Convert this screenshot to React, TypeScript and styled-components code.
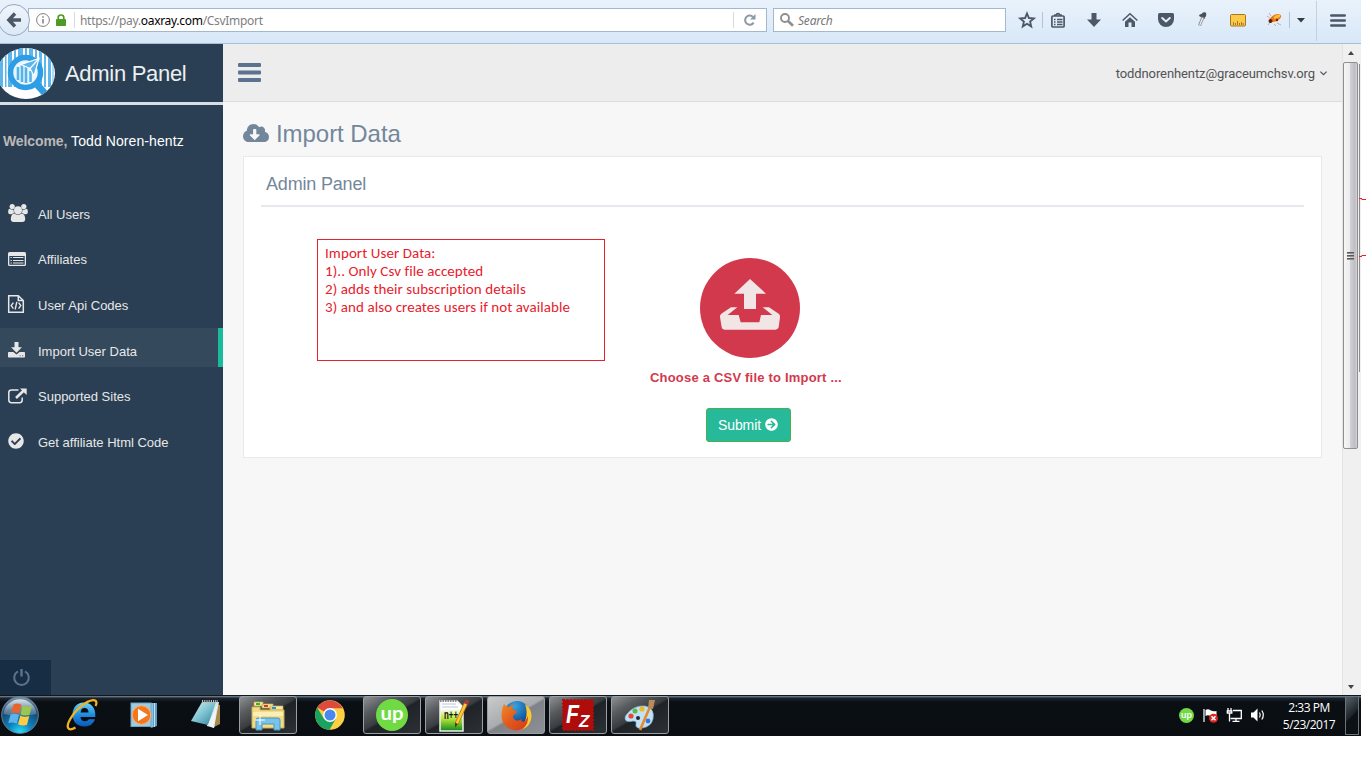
import React from 'react';
import styled, { createGlobalStyle, css } from 'styled-components';
import { FaCheckCircle, FaArrowCircleRight, FaCloudDownloadAlt } from 'react-icons/fa';

const GlobalStyle = createGlobalStyle`
  * { box-sizing: border-box; }
  body { margin: 0; background: #fff; overflow: hidden; font-family: "Liberation Sans", Arial, sans-serif; }
  svg { display: block; flex: none; overflow: visible; }
`;

const Screen = styled.div`
  position: relative;
  width: 1366px;
  height: 768px;
  background: #fff;
`;
const Windowed = styled.div`
  width: 1361px;
  height: 736px;
  display: flex;
  flex-direction: column;
`;

/* ---------- browser bar ---------- */
const BrowserBar = styled.div`
  height: 44px;
  display: flex;
  align-items: flex-start;
  background: linear-gradient(#e9f2fb, #d8e8f8);
  border-bottom: 1px solid #a9bdd3;
  font-family: "Noto Sans", "Open Sans", sans-serif;
  font-size: 12px;
`;
const BackButton = styled.div`
  width: 32px;
  height: 32px;
  margin: 4px 0 0 -2px;
  border-radius: 50%;
  border: 1px solid #93a8c0;
  background: linear-gradient(#eff5fc, #dce8f5);
  display: flex;
  align-items: center;
  justify-content: center;
  z-index: 1;
`;
const Field = styled.div<{ $w: number; $ml: number }>`
  width: ${p => p.$w}px;
  margin: 8px 0 0 ${p => p.$ml}px;
  height: 24px;
  border: 1px solid #a3b7cd;
  background: #fff;
  display: flex;
  align-items: center;
  white-space: nowrap;
`;
const Address = styled.span`
  margin-left: 5px;
  padding-top: 2px;
  color: #808080;
  flex: 1;
  line-height: 20px;
  letter-spacing: -0.3px;
  b { font-weight: 400; color: #000; }
`;
const Placeholder = styled.i`
  color: #777;
  margin-left: 4px;
  letter-spacing: -0.2px;
`;
const Divider = styled.div<{ $h?: number; $mt?: number; $color?: string }>`
  width: 1px;
  height: ${p => p.$h ?? 16}px;
  margin-top: ${p => p.$mt ?? 0}px;
  background: ${p => p.$color ?? '#d5dade'};
`;
const Tools = styled.div`
  display: flex;
  gap: 6px;
`;
const Tool = styled.div<{ $w?: number; $ml?: number }>`
  width: ${p => p.$w ?? 30}px;
  margin-left: ${p => p.$ml ?? 0}px;
  height: 40px;
  display: flex;
  align-items: center;
  justify-content: center;
`;

/* ---------- page ---------- */
const Viewport = styled.div`
  flex: 1;
  min-height: 0;
  display: flex;
  background: #f7f7f7;
`;
const Sidebar = styled.aside`
  width: 223px;
  background: #2a3f54;
  display: flex;
  flex-direction: column;
`;
const Brand = styled.div`
  height: 61px;
  padding-top: 2px;
  border-bottom: 3px solid #d9dee4;
  display: flex;
  align-items: center;
  color: #ecf0f1;
  font-size: 22px;
  letter-spacing: -0.3px;
  gap: 9px;
`;
const Welcome = styled.div`
  margin: 28px 0 0 3px;
  font-size: 14px;
  line-height: 17px;
  letter-spacing: 0.09px;
  color: #fff;
  white-space: nowrap;
  b { color: #bab8b8; letter-spacing: -0.1px; }
`;
const Menu = styled.nav`
  margin-top: 41.3px;
  flex: 1;
  display: flex;
  flex-direction: column;
  gap: 6.6px;
`;
const MenuItem = styled.a<{ $active?: boolean }>`
  height: 39px;
  padding: 7px 0 0 8px;
  display: flex;
  align-items: center;
  font-size: 13px;
  color: #e7e7e7;
  ${p => p.$active && css`
    background: #35495d;
    border-right: 5px solid #1abb9c;
  `}
`;
const MenuIcon = styled.span`
  width: 30px;
  height: 20px;
  margin-top: -2px;
  display: flex;
  align-items: center;
`;
const PowerButton = styled.div`
  width: 51px;
  height: 35px;
  padding-left: 13px;
  background: #172d44;
  display: flex;
  align-items: center;
`;
const Main = styled.main`
  flex: 1;
  display: flex;
  flex-direction: column;
`;
const TopNav = styled.header`
  height: 58px;
  padding: 0 15px;
  background: #ededed;
  border-bottom: 1px solid #d9dee4;
  display: flex;
  align-items: center;
  justify-content: space-between;
`;
const Account = styled.div`
  display: flex;
  align-items: center;
  gap: 5px;
  padding-top: 1px;
  font-family: Roboto, sans-serif;
  font-size: 13px;
  letter-spacing: -0.1px;
  color: #515356;
`;
const PageTitle = styled.h1`
  margin: 17px 0 0 20px;
  height: 30px;
  display: flex;
  align-items: center;
  gap: 7px;
  font-weight: 400;
  font-size: 24px;
  letter-spacing: -0.05px;
  color: #73879c;
  svg { margin-top: -2px; }
`;
const Panel = styled.section`
  margin: 7px 20px 0;
  height: 302px;
  padding: 0 17px;
  background: #fff;
  border: 1px solid #e6e9ed;
`;
const PanelTitle = styled.h2`
  margin: 0;
  height: 50px;
  padding: 6px 0 0 5px;
  border-bottom: 2px solid #e6e9ed;
  display: flex;
  align-items: center;
  font-weight: 400;
  font-size: 18px;
  letter-spacing: -0.18px;
  color: #73879c;
`;
const PanelBody = styled.div`
  display: flex;
  padding: 32px 0 0 56px;
`;
const Note = styled.div`
  width: 288px;
  height: 122px;
  padding: 4px 7px;
  border: 1px solid #e8202c;
  color: #e8202c;
  font-family: Carlito, Lato, sans-serif;
  font-size: 15px;
  line-height: 18px;
  letter-spacing: 0.08px;
  white-space: nowrap;
`;
const Upload = styled.div`
  margin: 19px 0 0 45px;
  display: flex;
  flex-direction: column;
  align-items: flex-start;
`;
const UploadDisc = styled.div`
  width: 100px;
  height: 100px;
  margin-left: 50px;
  border-radius: 50%;
  background: #d3394c;
`;
const UploadLabel = styled.div`
  margin-top: 12px;
  line-height: 16px;
  font-size: 13px;
  font-weight: 700;
  letter-spacing: 0.2px;
  color: #d3394c;
  white-space: nowrap;
`;
const Submit = styled.button`
  width: 85px;
  height: 34px;
  margin: 22px 0 0 56px;
  padding: 0 1px 1px 0;
  border: 1px solid #4cae4c;
  border-radius: 3px;
  background: #26b99a;
  color: #fff;
  font: 14px "Liberation Sans", Arial, sans-serif;
  letter-spacing: -0.1px;
  display: flex;
  align-items: center;
  justify-content: center;
  gap: 4px;
`;

/* ---------- scrollbar ---------- */
const Scrollbar = styled.div`
  width: 19px;
  display: flex;
  background: #f0f0f0;
  border-left: 1px solid #e3e3e3;
`;
const ScrollTrack = styled.div`
  width: 15px;
  display: flex;
  flex-direction: column;
  align-items: center;
`;
const ScrollArrow = styled.div<{ $down?: boolean }>`
  width: 0;
  height: 0;
  margin: ${p => (p.$down ? 'auto 0 6px' : '7px 0 7px')};
  border: 3.5px solid transparent;
  ${p => (p.$down
    ? 'border-top: 4px solid #444; border-bottom: 0;'
    : 'border-bottom: 4px solid #444; border-top: 0;')}
`;
const Thumb = styled.div`
  width: 15px;
  height: 387px;
  border: 1px solid #8f8f8f;
  border-radius: 2px;
  background: linear-gradient(90deg, #f6f6f6, #ececee 42%, #cfcfd4 50%, #bdbdc4 85%, #d6d6da);
  display: flex;
  flex-direction: column;
  align-items: center;
  justify-content: center;
  gap: 1px;
`;
const Grip = styled.i`
  width: 7px;
  height: 2px;
  background: linear-gradient(#3e3e3e, #aaa);
`;
const OuterThumb = styled.div`
  width: 1px;
  height: 308px;
  margin: 20px 0 0 1px;
  background: #8c8c8c;
`;

/* ---------- taskbar ---------- */
const Taskbar = styled.footer`
  height: 41px;
  display: flex;
  background: linear-gradient(#10161d 0, #10161d 1px, #79858e 1px, #56616b 2px, #1b2630 3px, #0a0f14 7px, #0a0e13);
`;
const StartSlot = styled.div`
  width: 51px;
  padding: 1px 0 0 1px;
`;
const Slot = styled.div<{ $state?: 'open' | 'front' }>`
  width: 58px;
  height: 38px;
  margin: 1px 2px 0;
  display: flex;
  align-items: center;
  justify-content: center;
  ${p => p.$state && css`
    border: 1px solid #9a9fa3;
    border-radius: 3px;
    background: ${p.$state === 'front'
      ? 'linear-gradient(150deg, #c9cbcc 0, #a9abae 48%, #7f8286 52%, #8d9094 100%)'
      : 'linear-gradient(150deg, #8e9092 0, #5a5d60 25%, #393d40 48%, #1f2327 52%, #2c3135 100%)'};
  `}
`;
const Tray = styled.div`
  margin-left: auto;
  display: flex;
  align-items: center;
`;
const TrayIcons = styled.div`
  display: flex;
  gap: 9px;
  margin-right: 17px;
`;
const Clock = styled.div`
  width: 54px;
  margin-right: 9px;
  color: #fff;
  font: 12px/17px "Open Sans", "Noto Sans", sans-serif;
  letter-spacing: -0.5px;
  text-align: center;
  white-space: nowrap;
`;
const ShowDesktop = styled.div`
  width: 14px;
  height: 39px;
  margin-right: 2px;
  border: 1px solid #69737a;
  background: linear-gradient(135deg, #59636a, #1b2228 50%, #0c1116 52%);
`;

const Overflow = styled.svg`
  position: absolute;
  left: 1359px;
  top: 198px;
`;

const ink = '#4c5866';

const Logo = () => (
  <svg width="56" height="52" viewBox="0 0 56 52">
    <defs><clipPath id="disc"><ellipse cx="26" cy="25.5" rx="29" ry="25.5" /></clipPath></defs>
    <g clipPath="url(#disc)">
      <rect x="-4" width="60" height="52" fill="#fff" />
      <g fill="#5cb6ec">
        <rect x="0" width="3" height="39" /><rect x="5" width="1.5" height="39" /><rect x="8" width="4" height="39" />
        <rect x="14" width="2" height="39" /><rect x="18" width="5" height="39" /><rect x="25" width="2" height="39" />
        <rect x="29" width="4" height="39" /><rect x="35" width="2" height="39" /><rect x="39" width="3" height="39" />
        <rect x="44" width="2" height="39" /><rect x="48" width="3" height="39" /><rect x="52.5" width="1" height="39" />
      </g>
      <circle cx="25.500" cy="24.500" r="15" fill="#e8f5fd" stroke="#2d9ee6" strokeWidth="5.500" />
      <path d="M18 19v13M22 17v17M26 18v17M30.500 23v11" stroke="#55b3ec" strokeWidth="2.600" />
      <path d="M21 16.500L39 10.500L34 28L30 20.500Z" fill="#5cb6ec" stroke="#fff" strokeWidth="1.200" />
      <path d="M30 20.500L39 10.500" stroke="#fff" strokeWidth="1.200" />
      <path d="M35.500 35L46 46.500" stroke="#2d9ee6" strokeWidth="7" />
    </g>
  </svg>
);

const UsersIcon = () => (
  <svg width="20" height="18" viewBox="0 0 20 18" fill="#e7e7e7">
    <circle cx="4.200" cy="2.600" r="2.600" /><circle cx="15.800" cy="2.600" r="2.600" />
    <path d="M.2 7.600Q0 5 1.600 4.800Q4 6.300 5.600 5.400Q5.400 7.700 6.500 9.100Q4.500 9.300 3.700 10.300H2Q.2 10.300 .2 8.600Z" />
    <path d="M19.800 7.600Q20 5 18.400 4.800Q16 6.300 14.400 5.400Q14.600 7.700 13.500 9.100Q15.500 9.300 16.300 10.300H18Q19.800 10.300 19.800 8.600Z" />
    <circle cx="10" cy="6.200" r="4" />
    <path d="M6.300 9.400Q10 12 13.700 9.400Q17.200 10 17.200 15Q17.200 18 14.400 18H5.600Q2.800 18 2.800 15Q2.800 10 6.300 9.400Z" />
  </svg>
);
const ListIcon = () => (
  <svg width="18" height="14" viewBox="0 0 18 14">
    <path fillRule="evenodd" fill="#e7e7e7" d="M1.500 0h15A1.500 1.500 0 0 1 18 1.500v11a1.500 1.500 0 0 1-1.500 1.500h-15A1.500 1.500 0 0 1 0 12.500v-11A1.500 1.500 0 0 1 1.500 0ZM1.300 4v8.200q0 .5.500.5h14.400q.5 0 .5-.5V4Z" />
    <path d="M2.500 5.500h1.300M5 5.500h10.500M2.500 8.500h1.300M5 8.500h10.500M2.500 11h1.300M5 11h10.500" stroke="#e7e7e7" strokeWidth="1" />
  </svg>
);
const CodeFileIcon = () => (
  <svg width="16" height="18" viewBox="0 0 16 18" fill="none" stroke="#e7e7e7" strokeWidth="1.500">
    <path d="M.7.700H10.300L15.300 5.500V17.300H.7ZM10.300.700V5.500H15.300" />
    <path d="M5.400 7.600L3.200 10.600L5.400 13.600M10.600 7.600L12.800 10.600L10.600 13.600M8.800 6.800L7.200 14.400" strokeWidth="1.400" />
  </svg>
);
const DownloadIcon = () => (
  <svg width="17" height="16" viewBox="0 0 17 16">
    <path fill="#e7e7e7" d="M6.500 0h4v5.300h3.400L8.500 10.700L3.100 5.300h3.400Z" />
    <path fill="#e7e7e7" d="M.8 10h4.500l3.200 2.500L11.700 10h4.500q.8 0 .8.800v4q0 .7-.8.700H.8Q0 15.500 0 14.800v-4Q0 10 .8 10Z" />
    <path fill="#8c979f" d="M11.500 13h1.300v1.200h-1.300zM14 13h1.300v1.200H14z" />
  </svg>
);
const ExternalIcon = () => (
  <svg width="19" height="16" viewBox="0 0 19 16">
    <path d="M10.500 2H3.500Q.8 2 .8 4.600V12Q.8 14.700 3.500 14.700H11.500Q14.200 14.700 14.200 12V9.500" fill="none" stroke="#e7e7e7" strokeWidth="1.500" />
    <path d="M8 10L15.500 2.800" stroke="#e7e7e7" strokeWidth="2.600" />
    <path d="M12 .4H18.700V7L16.500 5L14 2.500Z" fill="#e7e7e7" />
  </svg>
);
const PowerIcon = () => (
  <svg width="17" height="17" viewBox="0 0 17 17" fill="none" stroke="#5a738e" strokeWidth="2">
    <path d="M5 2.300A7.300 7.300 0 1 0 12 2.300" /><path d="M8.500 0V7.500" strokeWidth="2.400" />
  </svg>
);
const UploadIcon = () => (
  <svg width="100" height="100" viewBox="0 0 300 300" fill="#f2e5e6">
    <path d="M150 63L198 107H168V153H132V107H103Z" />
    <path d="M93 148H112L83 171H116L122 193H178L183 171H217L188 148H207L236 167Q241 171 240 177L236 208Q234 215 226 215H74Q66 215 65 208L60 177Q59 171 64 167Z" />
  </svg>
);

const StartOrb = () => (
  <svg width="38" height="38" viewBox="0 0 38 38">
    <defs>
      <radialGradient id="orb" cx=".5" cy="1" r=".95"><stop offset="0" stopColor="#27e6ff" /><stop offset=".35" stopColor="#0f82bd" /><stop offset=".75" stopColor="#15476f" /><stop offset="1" stopColor="#6f8ca5" /></radialGradient>
      <linearGradient id="gloss" x2="0" y2="1"><stop offset="0" stopColor="#dbe6ee" /><stop offset="1" stopColor="#6e8ba3" stopOpacity=".5" /></linearGradient>
    </defs>
    <circle cx="19" cy="19" r="18.300" fill="url(#orb)" stroke="#6b8296" strokeWidth="1" />
    <path d="M2.500 18A16.600 16.600 0 0 1 35.500 18Q19 22 2.500 18Z" fill="url(#gloss)" />
    <path d="M12.500 8.500Q16 6.500 20.500 8.800L18.300 17.500Q13.500 15.400 10 17.300Z" fill="#e8642c" />
    <path d="M21.800 9.500Q26.500 12 31 10L28.500 18.800Q24 20.500 19.500 18.200Z" fill="#9ac84a" />
    <path d="M9.600 18.600Q13.500 16.800 18 19L15.700 27.600Q11 25.500 7.300 27Z" fill="#5cb4ea" />
    <path d="M19.300 19.700Q24 21.800 28.300 20L26 28.800Q21.500 30.400 17 28.200Z" fill="#ffcb45" />
  </svg>
);
const IeIcon = () => (
  <svg width="32" height="32" viewBox="0 0 32 32">
    <defs><linearGradient id="ie" x2="0" y2="1"><stop offset="0" stopColor="#6fd3f8" /><stop offset=".5" stopColor="#1e8ee0" /><stop offset="1" stopColor="#0a58b8" /></linearGradient></defs>
    <path fillRule="evenodd" fill="url(#ie)" d="M17.500 3.500C25.500 3.500 30 9 29.300 18H14.500Q15 22.300 19 22.300Q21.700 22.300 23 20.200H29Q26.500 27.500 18.500 27.500C10.500 27.500 6.500 22 6.500 15.500S11 3.500 17.500 3.500ZM14.600 13.400H22.600Q22.200 9 18.600 9T14.600 13.400Z" />
    <path d="M9.500 28.500C2 33 -.5 28.500 4 20.500C10 9.500 20.500 2 27 1.200C31 1 31 4.500 29.500 7" fill="none" stroke="#f3b51d" strokeWidth="2.300" />
  </svg>
);
const PlayerIcon = () => (
  <svg width="28" height="28" viewBox="0 0 28 28">
    <path d="M5 2H27V25L21 27Z" fill="#5b9fc6" /><path d="M24.500 2V26M22 2V26" stroke="#c3e1ef" strokeWidth="1" />
    <rect x="1" y="2" width="20" height="23.500" fill="#9fcbe2" stroke="#6ba5c6" />
    <circle cx="11.500" cy="14" r="9.300" fill="#f4771d" stroke="#fbb077" /><path d="M8 7.800L18 14L8 20.200Z" fill="#fff" />
  </svg>
);
const NotepadIcon = () => (
  <svg width="32" height="32" viewBox="0 0 32 32">
    <defs><linearGradient id="pad" x2="1" y2="1"><stop offset="0" stopColor="#dff2f6" /><stop offset=".5" stopColor="#7cc2d0" /><stop offset="1" stopColor="#2d7e94" /></linearGradient></defs>
    <path d="M26 5L30 6V25L24 28Z" fill="#a88748" />
    <path d="M13 3H29L24 29L17 27Z" fill="#dae6ea" /><path d="M12 3H26L18 26L1 22Z" fill="url(#pad)" />
    <path d="M12 2.500H28" stroke="#bcbcbc" strokeWidth="3" strokeDasharray="1.200 1" /><path d="M18 26L27 6L24 29Z" fill="#eef5f7" />
  </svg>
);
const ExplorerIcon = () => (
  <svg width="34" height="32" viewBox="0 0 34 32">
    <path d="M3 3H12V7H3ZM11 5H22V9H11ZM19 7H32V11H19Z" fill="#f7e8a3" stroke="#c9a94a" strokeWidth=".7" />
    <path d="M5 4h4v2H5z" fill="#1fba2e" /><path d="M13 6h4v2h-4z" fill="#d93b27" /><path d="M21 8h4v2h-4z" fill="#2492e8" />
    <path d="M1 8H9V11H33V29H1Z" fill="#f3dc86" stroke="#cfae54" /><path d="M2 13H32V17H2Z" fill="#fbefb5" />
    <path d="M5 31V21Q5 19 7 19H27Q29 19 29 21V31H23V25H11V31Z" fill="#79c3ea" stroke="#4694c5" />
    <path d="M9 16V26M4 21H14" stroke="#fff" strokeWidth="1" />
  </svg>
);
const ChromeIcon = () => (
  <svg width="30" height="30" viewBox="0 0 30 30">
    <circle cx="15" cy="15" r="14.800" fill="#fdd043" />
    <path d="M15 15L2.200 7.600A14.800 14.800 0 0 1 27.800 8.200H15Z" fill="#dd4b3e" />
    <path d="M15 15L9 18.700L2.200 7.600A14.800 14.800 0 0 0 14.500 29.800L21 18.500Z" fill="#1aa260" />
    <circle cx="15" cy="15" r="6.900" fill="#fff" /><circle cx="15" cy="15" r="5.500" fill="#4a87ee" />
  </svg>
);
const UpworkIcon = ({ size }: { size: number }) => (
  <svg width={size} height={size} viewBox="0 0 32 32">
    <circle cx="16" cy="16" r="16" fill="#6fda44" />
    <text x="16" y="20.500" textAnchor="middle" textLength="23" lengthAdjust="spacingAndGlyphs" fontFamily="Lato, sans-serif" fontWeight="700" fontSize="18" fill="#fff">up</text>
  </svg>
);
const NotepadPlusIcon = () => (
  <svg width="32" height="33" viewBox="0 0 32 33">
    <defs><linearGradient id="npp" x2="0" y2="1"><stop offset=".25" stopColor="#fff" /><stop offset=".6" stopColor="#b4e436" /><stop offset="1" stopColor="#0d8a1d" /></linearGradient></defs>
    <path d="M2 2H19L25 8V32H2Z" fill="url(#npp)" stroke="#eee" strokeWidth="1.500" />
    <path d="M4 5H18M4 8H20" stroke="#b9c6dc" strokeWidth="1" /><path d="M2 2H19" stroke="#888" strokeWidth="2" strokeDasharray="1.500 1" />
    <text x="6" y="20" fontFamily="Liberation Sans, sans-serif" fontSize="13" fontWeight="700" textLength="14" lengthAdjust="spacingAndGlyphs" fill="#111">n++</text>
    <path d="M28 4L18.500 25" stroke="#bd7a16" strokeWidth="4.200" /><path d="M28 4L18.500 25" stroke="#ffc93a" strokeWidth="2.400" />
    <path d="M29.600 1L27.800 5" stroke="#a53b3b" strokeWidth="4" /><path d="M17 23.500L20 25L17 28.500Z" fill="#4a3a1a" />
  </svg>
);
const FirefoxIcon = () => (
  <svg width="31" height="31" viewBox="0 0 31 31">
    <defs>
      <linearGradient id="fox" x2="1" y2="1"><stop offset="0" stopColor="#f08a24" /><stop offset=".5" stopColor="#e2581e" /><stop offset="1" stopColor="#cf3a1a" /></linearGradient>
      <radialGradient id="globe" cx=".4" cy=".2" r=".8"><stop offset="0" stopColor="#36a6e3" /><stop offset="1" stopColor="#0b3a80" /></radialGradient>
    </defs>
    <circle cx="16" cy="14" r="13" fill="url(#globe)" />
    <path d="M24 4Q31 9 30.500 17Q29 29 16 30.500Q22 27 24.500 20Q27 12 24 4Z" fill="#fbc92f" />
    <path d="M3 4Q5 7 8 7Q10 5 13 4.500Q10.500 8 12.500 10Q15 10.500 16 11.500Q16 13 12.500 15Q11 19 15 20.500Q18 21 20.500 19Q20 23 24 21Q26 19 26.500 16Q28 21 24.500 26Q21 30.500 15 30.500Q2 29 .5 17Q.5 9 3 4Z" fill="url(#fox)" />
  </svg>
);
const FilezillaIcon = () => (
  <svg width="32" height="32" viewBox="0 0 32 32">
    <rect x="1" y="1" width="30" height="30" fill="#b00c0c" stroke="#b00c0c" strokeWidth="2" strokeDasharray="2 1.500" />
    <g fontFamily="Liberation Sans, sans-serif" fontWeight="700" fontStyle="italic" fill="#fff">
      <text x="4" y="24" fontSize="26" textLength="13" lengthAdjust="spacingAndGlyphs">F</text>
      <text x="17" y="28" fontSize="17">Z</text>
    </g>
  </svg>
);
const PaintIcon = () => (
  <svg width="32" height="32" viewBox="0 0 32 32">
    <path d="M3 15Q10 6 21 7Q31 9 29 20Q27 28 18 29Q11 30 12 25Q13 22 9 22Q1 24 1 19Q1 17 3 15Z" fill="#c3e1f4" stroke="#7fb3d6" strokeWidth=".7" />
    <circle cx="7" cy="17" r="2.600" fill="#e14a3b" /><circle cx="11" cy="12" r="2.500" fill="#59b943" /><circle cx="18" cy="10" r="2.600" fill="#efb923" />
    <circle cx="14" cy="19" r="2" fill="#1c2c3a" /><circle cx="24" cy="22" r="2.400" fill="#3b78d6" />
    <path d="M25.500 9L16 31" stroke="#e58a2d" strokeWidth="2.600" /><path d="M25 1L31 1L29 10L24 9Z" fill="#b98b5a" />
  </svg>
);

const menu = [
  { label: 'All Users', icon: <UsersIcon /> },
  { label: 'Affiliates', icon: <ListIcon /> },
  { label: 'User Api Codes', icon: <CodeFileIcon /> },
  { label: 'Import User Data', icon: <DownloadIcon />, active: true },
  { label: 'Supported Sites', icon: <ExternalIcon /> },
  { label: 'Get affiliate Html Code', icon: <FaCheckCircle size={16} /> },
];

const tasks: { icon: React.ReactNode; state?: 'open' | 'front' }[] = [
  { icon: <IeIcon /> },
  { icon: <PlayerIcon /> },
  { icon: <NotepadIcon /> },
  { icon: <ExplorerIcon />, state: 'open' },
  { icon: <ChromeIcon /> },
  { icon: <UpworkIcon size={32} />, state: 'open' },
  { icon: <NotepadPlusIcon />, state: 'open' },
  { icon: <FirefoxIcon />, state: 'front' },
  { icon: <FilezillaIcon />, state: 'open' },
  { icon: <PaintIcon />, state: 'open' },
];

const Browser = () => (
  <BrowserBar>
    <BackButton>
      <svg width="16" height="16" viewBox="0 0 16 16" fill="none" stroke={ink} strokeWidth="3.400"><path d="M9 1.500L2.800 8L9 14.500M3 8H15" /></svg>
    </BackButton>
    <Field $w={739} $ml={-2}>
      <svg width="14" height="14" viewBox="0 0 14 14" style={{ marginLeft: 7 }} fill="none" stroke="#7e7e7e"><circle cx="7" cy="7" r="6.400" /><path d="M7 6V10.500M7 3.200V4.800" strokeWidth="1.500" /></svg>
      <svg width="10" height="12" viewBox="0 0 10 12" style={{ marginLeft: 6 }}><path d="M2.200 6V3.500Q2.200 1 5 1T7.800 3.500V6" fill="none" stroke="#4d9a27" strokeWidth="1.700" /><rect y="5" width="10" height="7" rx=".8" fill="#4d9a27" /></svg>
      <Divider style={{ marginLeft: 8 }} />
      <Address>https://pay.<b>oaxray.com</b>/CsvImport</Address>
      <Divider />
      <Tool $w={32}>
        <svg width="12" height="12" viewBox="0 0 12 12"><path d="M9.600 8.600A4.600 4.600 0 1 1 9 2.900" fill="none" stroke="#8a98a8" strokeWidth="2" /><path d="M11.500 0V5.500H6Z" fill="#8a98a8" /></svg>
      </Tool>
    </Field>
    <Field $w={233} $ml={6}>
      <svg width="14" height="14" viewBox="0 0 14 14" style={{ marginLeft: 6 }} fill="none" stroke="#8f8f8f"><circle cx="5" cy="5" r="4" strokeWidth="1.900" /><path d="M8 8L13 12.800" strokeWidth="2.600" /></svg>
      <Placeholder>Search</Placeholder>
    </Field>
    <Tool $ml={6}>
      <svg width="16" height="16" viewBox="0 0 16 16" fill="none" stroke={ink} strokeWidth="1.900"><path d="M8 1.500L9.900 6L14.800 6.400L11.100 9.600L12.200 14.400L8 11.800L3.800 14.400L4.900 9.600L1.200 6.400L6.100 6Z" /></svg>
    </Tool>
    <Divider $mt={12} $color="#b3c3d4" />
    <Tools>
      <Tool><svg width="14" height="15" viewBox="0 0 14 15" fill="none" stroke={ink}><rect x=".9" y="3" width="12.200" height="11" rx="1" strokeWidth="1.700" /><path d="M4 3V2H5.500Q5.500.6 7 .6T8.500 2H10V3" strokeWidth="1.700" /><path d="M3 6.500h1.500M6 6.500h5.500M3 9h1.500M6 9h5.500M3 11.500h1.500M6 11.500h5.500" strokeWidth="1.300" /></svg></Tool>
      <Tool><svg width="14" height="14" viewBox="0 0 14 14" fill={ink}><path d="M4.500 0H9.500V6.500H14L7 14L0 6.500H4.500Z" /></svg></Tool>
      <Tool><svg width="16" height="14" viewBox="0 0 16 14"><path d="M.6 7.500L8 .8L15.400 7.500" fill="none" stroke={ink} strokeWidth="1.500" /><path d="M3 8.700L8 4.300L13 8.700V14H9.500V9.500H6.500V14H3Z" fill={ink} /></svg></Tool>
      <Tool><svg width="16" height="14" viewBox="0 0 16 14"><path d="M1.500 0H14.500Q16 0 16 1.500V6A8 8 0 0 1 0 6V1.500Q0 0 1.500 0Z" fill={ink} /><path d="M4.200 5L8 8.500L11.800 5" fill="none" stroke="#e6eff9" strokeWidth="2" strokeLinecap="round" /></svg></Tool>
      <Tool><svg width="12" height="16" viewBox="0 0 12 16"><path d="M3 4Q3 2 5.500 2L7 .5Q9.500-.5 10.300 1.500Q10.500 4 9 5.500L8.500 7Z" fill="#4a5058" /><path d="M7 5L3.500 13.500" stroke="#8b9299" strokeWidth="3.200" /><path d="M6.700 6L3.800 13" stroke="#e9edf0" strokeWidth="1.400" /></svg></Tool>
      <Tool><svg width="16" height="13" viewBox="0 0 16 13"><rect x=".5" y=".5" width="15" height="11.500" rx="1" fill="#fcc948" stroke="#a87520" /><path d="M3.500 11V8M5.500 11V9M7.500 11V7M9.500 11V9M11.500 11V8M13.200 11V9" stroke="#a87520" /></svg></Tool>
      <Tool><svg width="16" height="14" viewBox="0 0 16 14"><path d="M1 3L5 6M2 12L5 8M11 10L15 12M8 11L10 13M5 3L3 0" stroke="#a5713c" strokeWidth=".5" /><ellipse cx="9.500" cy="5" rx="6" ry="3.300" transform="rotate(-25 9.500 5)" fill="#e9781b" /><ellipse cx="11" cy="3.700" rx="3.500" ry="1.500" transform="rotate(-25 11 3.700)" fill="#fbc13e" /><circle cx="4.500" cy="8" r="2" fill="#5d1f0c" /><circle cx="11" cy="7" r="1.200" fill="#861b10" /></svg></Tool>
    </Tools>
    <Divider $mt={12} $color="#b3c3d4" />
    <Tool $w={21}><svg width="8" height="5" viewBox="0 0 8 5"><path d="M0 0H8L4 4.500Z" fill="#333c46" /></svg></Tool>
    <Divider $h={40} $mt={1} $color="#c3d0de" style={{ marginLeft: 5 }} />
    <Tool $w={42}><svg width="16" height="13" viewBox="0 0 16 13" stroke={ink} strokeWidth="2.600" strokeLinecap="round"><path d="M1.300 1.500H14.700M1.300 6.500H14.700M1.300 11.500H14.700" /></svg></Tool>
  </BrowserBar>
);

export default function App() {
  return (
    <Screen>
      <GlobalStyle />
      <Windowed>
        <Browser />
        <Viewport>
          <Sidebar>
            <Brand><Logo />Admin Panel</Brand>
            <Welcome><b>Welcome,</b> Todd Noren-hentz</Welcome>
            <Menu>
              {menu.map(m => (
                <MenuItem key={m.label} $active={m.active}><MenuIcon>{m.icon}</MenuIcon>{m.label}</MenuItem>
              ))}
            </Menu>
            <PowerButton><PowerIcon /></PowerButton>
          </Sidebar>
          <Main>
            <TopNav>
              <svg width="23" height="19" viewBox="0 0 23 19" fill="#5a738e"><rect width="23" height="4" rx="1" /><rect y="7.500" width="23" height="4" rx="1" /><rect y="15" width="23" height="4" rx="1" /></svg>
              <Account>
                toddnorenhentz@graceumchsv.org
                <svg width="7" height="5" viewBox="0 0 7 5" fill="none" stroke="#515356" strokeWidth="1.200"><path d="M.4.600L3.500 3.700L6.600.600" /></svg>
              </Account>
            </TopNav>
            <PageTitle><FaCloudDownloadAlt size={26} />Import Data</PageTitle>
            <Panel>
              <PanelTitle>Admin Panel</PanelTitle>
              <PanelBody>
                <Note>
                  <div>Import User Data:</div>
                  <div>1).. Only Csv file accepted</div>
                  <div>2) adds their subscription details</div>
                  <div>3) and also creates users if not available</div>
                </Note>
                <Upload>
                  <UploadDisc><UploadIcon /></UploadDisc>
                  <UploadLabel>Choose a CSV file to Import ...</UploadLabel>
                  <Submit>Submit <FaArrowCircleRight size={13} /></Submit>
                </Upload>
              </PanelBody>
            </Panel>
          </Main>
          <Scrollbar>
            <ScrollTrack>
              <ScrollArrow />
              <Thumb><Grip /><Grip /><Grip /></Thumb>
              <ScrollArrow $down />
            </ScrollTrack>
            <OuterThumb />
          </Scrollbar>
        </Viewport>
        <Taskbar>
          <StartSlot><StartOrb /></StartSlot>
          {tasks.map((t, i) => <Slot key={i} $state={t.state}>{t.icon}</Slot>)}
          <Tray>
            <TrayIcons>
              <UpworkIcon size={15} />
              <svg width="15" height="15" viewBox="0 0 15 15"><path d="M1 1V14" stroke="#fff" strokeWidth="1.200" /><path d="M2.500 2Q5 .500 7.500 2.200T13.500 3V9Q10 9.500 7.500 8T2.500 8Z" fill="#fff" /><circle cx="10.500" cy="10.300" r="4.500" fill="#d9261f" /><path d="M8.500 8.300L12.500 12.300M12.500 8.300L8.500 12.300" stroke="#fff" strokeWidth="1.500" /></svg>
              <svg width="15" height="14" viewBox="0 0 15 14" fill="none" stroke="#fff" strokeWidth="1.300"><path d="M6 2.500H14.300V10.500H3.500M9 10.500V13M5.500 13.300H12.500" /><path d="M1 0V2.500M4 0V2.500M.3 3H4.800V5H.3ZM2.500 5V13.500" /></svg>
              <svg width="14" height="14" viewBox="0 0 14 14"><path d="M0 4.500H2.500L6.500 .500V13.500L2.500 9.500H0Z" fill="#fff" /><path d="M8.500 4.500Q10 7 8.500 9.500M10.800 2.500Q13.800 7 10.800 11.500" fill="none" stroke="#fff" strokeWidth="1.200" /></svg>
            </TrayIcons>
            <Clock>2:33 PM<br />5/23/2017</Clock>
            <ShowDesktop />
          </Tray>
        </Taskbar>
      </Windowed>
      <Overflow width="7" height="60" viewBox="0 0 7 60" stroke="#ed1c24">
        <path d="M0 .500H3M2.500 1.500H7M0 58.500H3M2.500 57.500H7" />
      </Overflow>
    </Screen>
  );
}
